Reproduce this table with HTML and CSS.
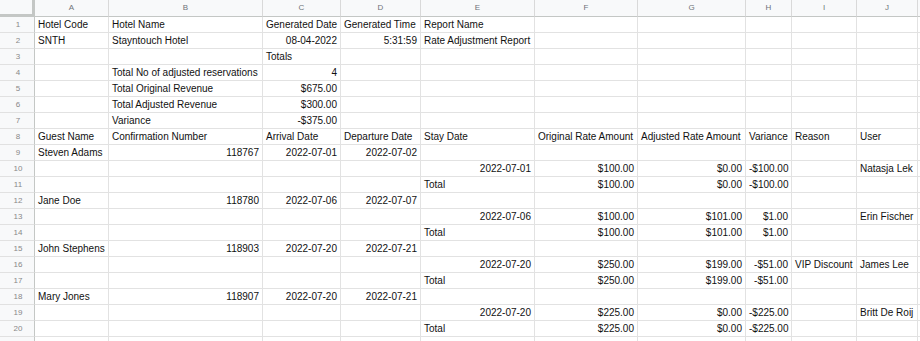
FILE: index.html
```html
<!DOCTYPE html>
<html>
<head>
<meta charset="utf-8">
<link rel="stylesheet" href="styles.css">
</head>
<body>
<div class="sheet">
  <div class="corner"></div><div class="hd">A</div><div class="hd">B</div><div class="hd">C</div><div class="hd">D</div><div class="hd">E</div><div class="hd">F</div><div class="hd">G</div><div class="hd">H</div><div class="hd">I</div><div class="hd">J</div><div class="hd"></div>

  <div class="rn">1</div><div class="c">Hotel Code</div><div class="c">Hotel Name</div><div class="c">Generated Date</div><div class="c">Generated Time</div><div class="c">Report Name</div><div class="c"></div><div class="c"></div><div class="c"></div><div class="c"></div><div class="c"></div><div class="c"></div>
  <div class="rn">2</div><div class="c">SNTH</div><div class="c">Stayntouch Hotel</div><div class="c r">08-04-2022</div><div class="c r">5:31:59</div><div class="c">Rate Adjustment Report</div><div class="c"></div><div class="c"></div><div class="c"></div><div class="c"></div><div class="c"></div><div class="c"></div>
  <div class="rn">3</div><div class="c"></div><div class="c"></div><div class="c">Totals</div><div class="c"></div><div class="c"></div><div class="c"></div><div class="c"></div><div class="c"></div><div class="c"></div><div class="c"></div><div class="c"></div>
  <div class="rn">4</div><div class="c"></div><div class="c">Total No of adjusted reservations</div><div class="c r">4</div><div class="c"></div><div class="c"></div><div class="c"></div><div class="c"></div><div class="c"></div><div class="c"></div><div class="c"></div><div class="c"></div>
  <div class="rn">5</div><div class="c"></div><div class="c">Total Original Revenue</div><div class="c r">$675.00</div><div class="c"></div><div class="c"></div><div class="c"></div><div class="c"></div><div class="c"></div><div class="c"></div><div class="c"></div><div class="c"></div>
  <div class="rn">6</div><div class="c"></div><div class="c">Total Adjusted Revenue</div><div class="c r">$300.00</div><div class="c"></div><div class="c"></div><div class="c"></div><div class="c"></div><div class="c"></div><div class="c"></div><div class="c"></div><div class="c"></div>
  <div class="rn">7</div><div class="c"></div><div class="c">Variance</div><div class="c r">-$375.00</div><div class="c"></div><div class="c"></div><div class="c"></div><div class="c"></div><div class="c"></div><div class="c"></div><div class="c"></div><div class="c"></div>
  <div class="rn">8</div><div class="c">Guest Name</div><div class="c">Confirmation Number</div><div class="c">Arrival Date</div><div class="c">Departure Date</div><div class="c">Stay Date</div><div class="c">Original Rate Amount</div><div class="c">Adjusted Rate Amount</div><div class="c">Variance</div><div class="c">Reason</div><div class="c">User</div><div class="c"></div>
  <div class="rn">9</div><div class="c">Steven Adams</div><div class="c r">118767</div><div class="c r">2022-07-01</div><div class="c r">2022-07-02</div><div class="c"></div><div class="c"></div><div class="c"></div><div class="c"></div><div class="c"></div><div class="c"></div><div class="c"></div>
  <div class="rn">10</div><div class="c"></div><div class="c"></div><div class="c"></div><div class="c"></div><div class="c r">2022-07-01</div><div class="c r">$100.00</div><div class="c r">$0.00</div><div class="c r">-$100.00</div><div class="c"></div><div class="c">Natasja Lek</div><div class="c"></div>
  <div class="rn">11</div><div class="c"></div><div class="c"></div><div class="c"></div><div class="c"></div><div class="c">Total</div><div class="c r">$100.00</div><div class="c r">$0.00</div><div class="c r">-$100.00</div><div class="c"></div><div class="c"></div><div class="c"></div>
  <div class="rn">12</div><div class="c">Jane Doe</div><div class="c r">118780</div><div class="c r">2022-07-06</div><div class="c r">2022-07-07</div><div class="c"></div><div class="c"></div><div class="c"></div><div class="c"></div><div class="c"></div><div class="c"></div><div class="c"></div>
  <div class="rn">13</div><div class="c"></div><div class="c"></div><div class="c"></div><div class="c"></div><div class="c r">2022-07-06</div><div class="c r">$100.00</div><div class="c r">$101.00</div><div class="c r">$1.00</div><div class="c"></div><div class="c">Erin Fischer</div><div class="c"></div>
  <div class="rn">14</div><div class="c"></div><div class="c"></div><div class="c"></div><div class="c"></div><div class="c">Total</div><div class="c r">$100.00</div><div class="c r">$101.00</div><div class="c r">$1.00</div><div class="c"></div><div class="c"></div><div class="c"></div>
  <div class="rn">15</div><div class="c">John Stephens</div><div class="c r">118903</div><div class="c r">2022-07-20</div><div class="c r">2022-07-21</div><div class="c"></div><div class="c"></div><div class="c"></div><div class="c"></div><div class="c"></div><div class="c"></div><div class="c"></div>
  <div class="rn">16</div><div class="c"></div><div class="c"></div><div class="c"></div><div class="c"></div><div class="c r">2022-07-20</div><div class="c r">$250.00</div><div class="c r">$199.00</div><div class="c r">-$51.00</div><div class="c">VIP Discount</div><div class="c">James Lee</div><div class="c"></div>
  <div class="rn">17</div><div class="c"></div><div class="c"></div><div class="c"></div><div class="c"></div><div class="c">Total</div><div class="c r">$250.00</div><div class="c r">$199.00</div><div class="c r">-$51.00</div><div class="c"></div><div class="c"></div><div class="c"></div>
  <div class="rn">18</div><div class="c">Mary Jones</div><div class="c r">118907</div><div class="c r">2022-07-20</div><div class="c r">2022-07-21</div><div class="c"></div><div class="c"></div><div class="c"></div><div class="c"></div><div class="c"></div><div class="c"></div><div class="c"></div>
  <div class="rn">19</div><div class="c"></div><div class="c"></div><div class="c"></div><div class="c"></div><div class="c r">2022-07-20</div><div class="c r">$225.00</div><div class="c r">$0.00</div><div class="c r">-$225.00</div><div class="c"></div><div class="c">Britt De Roij</div><div class="c"></div>
  <div class="rn">20</div><div class="c"></div><div class="c"></div><div class="c"></div><div class="c"></div><div class="c">Total</div><div class="c r">$225.00</div><div class="c r">$0.00</div><div class="c r">-$225.00</div><div class="c"></div><div class="c"></div><div class="c"></div>
  <div class="rn"></div><div class="c"></div><div class="c"></div><div class="c"></div><div class="c"></div><div class="c"></div><div class="c"></div><div class="c"></div><div class="c"></div><div class="c"></div><div class="c"></div><div class="c"></div>
</div>
</body>
</html>
```

FILE: styles.css
```css
html, body {
  margin: 0;
  padding: 0;
  background: #ffffff;
}

.sheet {
  display: grid;
  grid-template-columns: 35px 74px 154px 78px 80px 114px 103px 108px 46px 65px 61px 1fr;
  grid-template-rows: 17px repeat(21, 16px);
  font-family: "Liberation Sans", Arial, sans-serif;
  font-size: 10px;
  color: #111;
  width: 920px;
  overflow: hidden;
}

.sheet > div {
  box-sizing: border-box;
  white-space: nowrap;
  overflow: hidden;
}

.corner {
  background: #f8f9fa;
  border-right: 3px solid #c4c7c5;
  border-bottom: 3px solid #c4c7c5;
}

.hd {
  background: #f8f9fa;
  border-right: 1px solid #d9d9d9;
  border-bottom: 1px solid #c4c7c5;
  color: #6f7378;
  font-size: 8px;
  text-align: center;
  line-height: 16px;
}

.rn {
  background: #f8f9fa;
  border-right: 1px solid #c4c7c5;
  border-bottom: 1px solid #e1e1e1;
  color: #888;
  font-size: 8px;
  text-align: center;
  line-height: 15px;
  padding-left: 2px;
}

.c {
  border-right: 1px solid #e2e2e2;
  border-bottom: 1px solid #e2e2e2;
  padding: 1px 3px 0;
  line-height: 14px;
}

.r {
  text-align: right;
}
```
